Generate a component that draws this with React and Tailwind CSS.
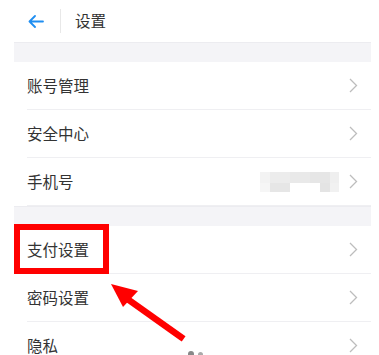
import React from 'react';

const groups = [
    [
        { label: '账号管理' },
        { label: '安全中心' },
        { label: '手机号', masked: true },
    ],
    [
        { label: '支付设置' },
        { label: '密码设置' },
        { label: '隐私' },
    ],
];

const Chevron = () => (
    <svg width="9" height="15" viewBox="0 0 9 15" fill="none">
        <path d="M1 1l6.5 6.5L1 14" stroke="#bdbdbd" strokeWidth="1.3" />
    </svg>
);

// bloque pixelado del número de teléfono
const MaskedPhone = () => (
    <div className="mr-[10px] flex flex-col">
        <div className="flex h-[11px]">
            <div className="w-[10px] bg-[#f3f3f3]" />
            <div className="w-[20px] bg-[#ececec]" />
            <div className="w-[20px] bg-[#e9e9e9]" />
            <div className="w-[20px] bg-[#e6e6e6]" />
            <div className="w-[9px] bg-[#efefef]" />
        </div>
        <div className="flex h-[9px]">
            <div className="w-[10px] bg-[#f6f6f6]" />
            <div className="w-[20px] bg-[#e6e6e6]" />
            <div className="w-[30px] bg-white" />
            <div className="w-[10px] bg-[#e4e4e4]" />
            <div className="w-[9px] bg-[#f1f1f1]" />
        </div>
    </div>
);

const Row = ({ label, masked }) => (
    <div className="flex h-[48px] items-stretch bg-white pl-[13px]">
        <div className="flex flex-1 items-center justify-between border-b border-[#efeff2] pr-[13px]">
            <span className="text-[15.5px] text-[#333333]">{label}</span>
            <div className="flex items-center">
                {masked && <MaskedPhone />}
                <Chevron />
            </div>
        </div>
    </div>
);

const App = () => {
    return (
        <div
            className="relative h-[355px] w-[379px] overflow-hidden bg-white"
            style={{ fontFamily: '"Noto Sans CJK SC", "Noto Sans", sans-serif' }}
        >
            {/* Encabezado */}
            <div className="flex h-[42px] items-center pl-[28px]">
                <svg width="16" height="13" viewBox="0 0 16 13" fill="none">
                    <path d="M15 6.5H1.5M7 1L1.5 6.5 7 12" stroke="#1f8ef1" strokeWidth="1.8" strokeLinecap="round" strokeLinejoin="round" />
                </svg>
                <div className="ml-[16px] h-[24px] w-px bg-[#e8e8e8]" />
                <span className="ml-[14px] text-[15.5px] text-[#333333]">设置</span>
            </div>

            <div className="ml-[14px] mr-[8px]">
                {groups.map((items, i) => (
                    <div key={i}>
                        <div className="h-[20px] border-t border-[#ececf0] bg-[#f4f4f7]" />
                        {items.map(item => (
                            <Row key={item.label} {...item} />
                        ))}
                    </div>
                ))}
            </div>

            {/* Anotación roja */}
            <div className="absolute left-[14px] top-[224px] h-[50px] w-[95px] border-[6px] border-[#ff0000]" />
            <svg className="absolute left-0 top-0" width="379" height="355" viewBox="0 0 379 355">
                <path d="M181 337L126 298" stroke="#ff0000" strokeWidth="6.5" strokeLinecap="square" />
                <path d="M111 284L138 291L123 307Z" fill="#ff0000" />
            </svg>

            <div className="absolute left-[188px] top-[351px] h-[4px] w-[6px] rounded-t-sm bg-[#888]" />
            <div className="absolute left-[198px] top-[352px] h-[3px] w-[5px] rounded-t-sm bg-[#aaa]" />
        </div>
    );
};

export default App;
